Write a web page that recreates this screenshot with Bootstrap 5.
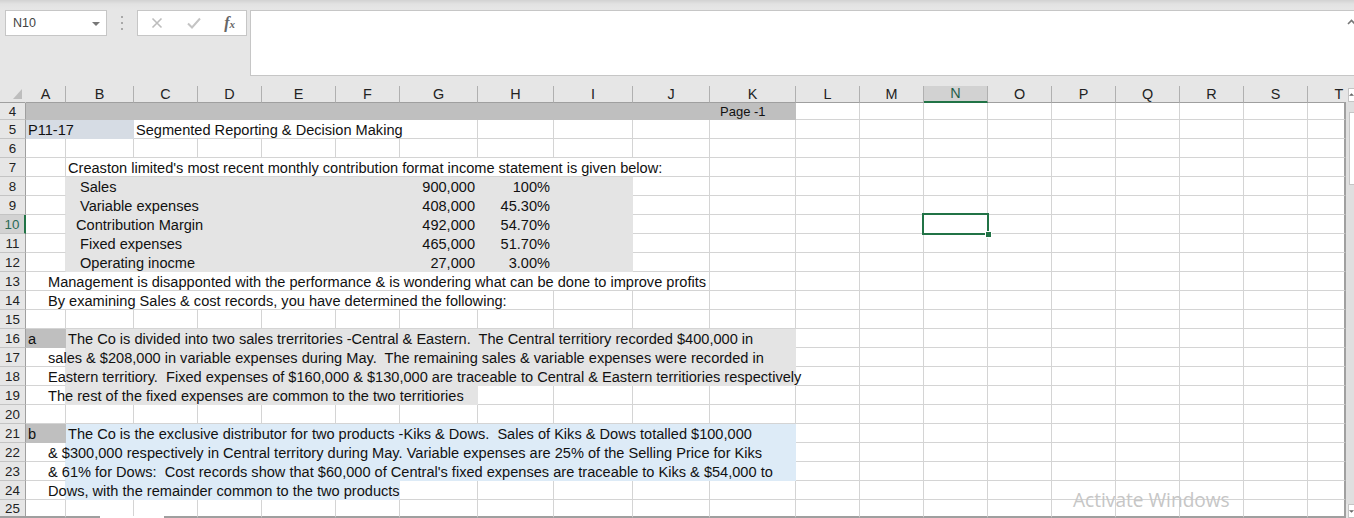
<!DOCTYPE html>
<html lang="en">
<head>
<meta charset="utf-8">
<title>Segmented Reporting</title>
<link href="https://cdn.jsdelivr.net/npm/bootstrap@5.3.0/dist/css/bootstrap.min.css" rel="stylesheet">
<style>
html,body{height:518px;overflow:hidden;background:#e6e6e6;font-family:"Liberation Sans",Arial,sans-serif;color:#111}
.xl-top{height:86px;padding-top:10px;background:linear-gradient(#d2d2d2 0,#e2e2e2 4px,#e6e6e6 9px)}
.xl-name{width:102px;height:26px;margin-left:5px;background:#fff;border:1px solid #c6c6c6;font-size:12.5px;color:#444;padding:1px 6px 0 7px}
.xl-caret{width:0;height:0;border-left:4px solid transparent;border-right:4px solid transparent;border-top:4px solid #777}
.xl-dots{width:30px;height:26px}
.xl-dots i{display:block;width:2px;height:2px;background:#a8a8a8;margin:2px 0}
.xl-fxbox{width:110px;height:26px;background:#fff;border:1px solid #c6c6c6;padding:0 11px 0 13px}
.xl-fx{font-family:"Liberation Serif",serif;font-style:italic;font-weight:700;font-size:16px;color:#666;line-height:1}
.xl-fx span{font-size:11px}
.xl-formula{height:66px;margin-left:3px;background:#fff;border:1px solid #c6c6c6;border-right:0;position:relative}
.xl-formula svg{position:absolute;right:-2px;top:8px}
.xl-sheet{position:relative;height:432px}
.xl-tbl{table-layout:fixed;border-collapse:separate;border-spacing:0;width:1346px;background:#fff;font-size:14.58px}
.xl-tbl td{height:19px;padding:2px 2px 0;line-height:16px;white-space:nowrap;border-right:1px solid #d4d4d4;border-bottom:1px solid #d4d4d4;vertical-align:bottom;overflow:visible}
.xl-tbl td:last-child{border-right:2px solid #a0a0a0}
.xl-tbl th{height:19px;padding:2px 0 0;background:#e6e6e6;font-weight:400;font-size:13.33px;line-height:16px;text-align:center;color:#222;border-right:1px solid #9f9f9f;border-bottom:1px solid #c4c4c4}
.xl-tbl thead th{height:17px;padding:0;font-size:14.4px;line-height:15px;border-right:1px solid #b0b0b0;border-bottom:1px solid #9f9f9f}
.xl-tbl thead th:last-child{border-right:0;padding-left:24px}
.xl-tbl thead th.xl-corner{border-right:1px solid #e6e6e6;position:relative}
.xl-corner svg{position:absolute;left:13px;top:2px}
.xl-tbl thead th.xl-colsel{background:#d2d2d2;color:#1f5f4a;border-bottom:2px solid #217346}
.xl-tbl th.xl-rowsel{background:#d2d2d2;color:#2a6a55;border-right:2px solid #217346}
.xl-tbl tr.xl-r4 td,.xl-tbl tr.xl-r4 th{height:17px;padding-top:0;line-height:15px}
.xl-tbl tr.xl-r25 td,.xl-tbl tr.xl-r25 th{height:18px;padding-top:1px;line-height:15px;border-bottom:2px solid #9f9f9f}
.xl-tbl td.xl-band{background:#bfbfbf;border-color:#bfbfbf}
.xl-tbl td.xl-page{font-size:13px;padding-left:10px}
.xl-tbl td.xl-steel{background:#d6dce4;border-color:#d6dce4}
.xl-tbl td.xl-gray{background:#e4e4e4;border-color:#e4e4e4}
.xl-tbl td.xl-blue{background:#ddebf7;border-color:#ddebf7}
.xl-tbl td.xl-edgeg{border-right-color:#e4e4e4}
.xl-tbl td.xl-edgeb{border-right-color:#ddebf7}
.xl-tbl td.xl-ind{padding-left:22px}
.xl-tbl td.xl-i1{padding-left:14px}
.xl-tbl td.xl-i2{padding-left:10px}
.xl-tbl td.xl-num{text-align:right;padding-right:2px}
.xl-tbl td.xl-pct{text-align:right;padding-right:3px}
.xl-tbl td.xl-sel{position:relative}
.xl-cursor{position:absolute;left:-2px;top:-2px;width:67px;height:22px;border:2px solid #217346}
.xl-cursor::after{content:"";position:absolute;right:-4px;bottom:-4px;width:5px;height:5px;background:#217346;border:1px solid #fff;box-sizing:content-box;margin:-1px}
.xl-sb{width:8px;padding-top:2px}
.xl-sbbtn{height:14px;background:#fff;border:1px solid #c4c4c4;border-right:0;margin-left:2px}
.xl-sbtrack{background:#dfdfdf}
.xl-thumb{height:73px;margin:10px 0 0 3px;background:#fff;border:1px solid #c4c4c4;border-right:0}
.xl-wm{position:absolute;left:1073px;top:402px;font-family:"Open Sans",sans-serif;font-size:19.1px;line-height:24px;color:#c6c6c6;white-space:nowrap}
.xl-gap{position:absolute;left:100px;bottom:0;width:64px;height:2px;background:#fff}
</style>
</head>
<body class="m-0">
<div class="xl-top d-flex align-items-start">
  <div class="xl-name d-flex align-items-center justify-content-between"><span>N10</span><span class="xl-caret"></span></div>
  <div class="xl-dots d-flex flex-column align-items-center justify-content-center"><i></i><i></i><i></i></div>
  <div class="xl-fxbox d-flex align-items-center justify-content-between">
    <svg width="12" height="12" viewBox="0 0 12 12"><path d="M1.5 1.5l9 9M10.5 1.5l-9 9" stroke="#bdbdbd" stroke-width="1.6" fill="none"/></svg>
    <svg width="14" height="12" viewBox="0 0 14 12"><path d="M1 6.5l4 4 8-9" stroke="#c4c4c4" stroke-width="2" fill="none"/></svg>
    <div class="xl-fx">f<span>x</span></div>
  </div>
  <div class="xl-formula flex-grow-1"><svg width="9" height="6" viewBox="0 0 9 6"><path d="M1 5l3.5-3.5L8 5" stroke="#777" stroke-width="1.6" fill="none"/></svg></div>
</div>
<div class="xl-sheet d-flex">
  <table class="xl-tbl flex-shrink-0">
    <colgroup><col style="width:26px"><col style="width:40px"><col style="width:68px"><col style="width:64px"><col style="width:64px"><col style="width:74px"><col style="width:64px"><col style="width:78px"><col style="width:76px"><col style="width:79px"><col style="width:77px"><col style="width:86px"><col style="width:64px"><col style="width:64px"><col style="width:64px"><col style="width:64px"><col style="width:64px"><col style="width:64px"><col style="width:64px"><col style="width:64px"><col style="width:38px"></colgroup>
    <thead><tr><th class="xl-corner"><svg width="10" height="12" viewBox="0 0 10 12"><path d="M9 1v10H0z" fill="#bdbdbd"/></svg></th><th>A</th><th>B</th><th>C</th><th>D</th><th>E</th><th>F</th><th>G</th><th>H</th><th>I</th><th>J</th><th>K</th><th>L</th><th>M</th><th class="xl-colsel">N</th><th>O</th><th>P</th><th>Q</th><th>R</th><th>S</th><th>T</th></tr></thead>
    <tbody>
      <tr class="xl-r4"><th>4</th><td class="xl-band" colspan="10"></td><td class="xl-band xl-page">Page -1</td><td></td><td></td><td></td><td></td><td></td><td></td><td></td><td></td><td></td></tr>
      <tr><th>5</th><td class="xl-steel" colspan="2">P11-17</td><td colspan="5">Segmented Reporting &amp; Decision Making</td><td></td><td></td><td></td><td></td><td></td><td></td><td></td><td></td><td></td><td></td><td></td><td></td><td></td></tr>
      <tr><th>6</th><td></td><td></td><td></td><td></td><td></td><td></td><td></td><td></td><td></td><td></td><td></td><td></td><td></td><td></td><td></td><td></td><td></td><td></td><td></td><td></td></tr>
      <tr><th>7</th><td></td><td colspan="9">Creaston limited's most recent monthly contribution format income statement is given below:</td><td></td><td></td><td></td><td></td><td></td><td></td><td></td><td></td><td></td><td></td></tr>
      <tr><th>8</th><td class="xl-edgeg"></td><td class="xl-gray xl-i1" colspan="5">Sales</td><td class="xl-gray xl-num">900,000</td><td class="xl-gray xl-pct">100%</td><td class="xl-gray"></td><td></td><td></td><td></td><td></td><td></td><td></td><td></td><td></td><td></td><td></td><td></td></tr>
      <tr><th>9</th><td class="xl-edgeg"></td><td class="xl-gray xl-i1" colspan="5">Variable expenses</td><td class="xl-gray xl-num">408,000</td><td class="xl-gray xl-pct">45.30%</td><td class="xl-gray"></td><td></td><td></td><td></td><td></td><td></td><td></td><td></td><td></td><td></td><td></td><td></td></tr>
      <tr><th class="xl-rowsel">10</th><td class="xl-edgeg"></td><td class="xl-gray xl-i2" colspan="5">Contribution Margin</td><td class="xl-gray xl-num">492,000</td><td class="xl-gray xl-pct">54.70%</td><td class="xl-gray"></td><td></td><td></td><td></td><td></td><td class="xl-sel"><div class="xl-cursor"></div></td><td></td><td></td><td></td><td></td><td></td><td></td></tr>
      <tr><th>11</th><td class="xl-edgeg"></td><td class="xl-gray xl-i1" colspan="5">Fixed expenses</td><td class="xl-gray xl-num">465,000</td><td class="xl-gray xl-pct">51.70%</td><td class="xl-gray"></td><td></td><td></td><td></td><td></td><td></td><td></td><td></td><td></td><td></td><td></td><td></td></tr>
      <tr><th>12</th><td class="xl-edgeg"></td><td class="xl-gray xl-i1" colspan="5">Operating inocme</td><td class="xl-gray xl-num">27,000</td><td class="xl-gray xl-pct">3.00%</td><td class="xl-gray"></td><td></td><td></td><td></td><td></td><td></td><td></td><td></td><td></td><td></td><td></td><td></td></tr>
      <tr><th>13</th><td class="xl-ind" colspan="10">Management is disapponted with the performance &amp; is wondering what can be done to improve profits</td><td></td><td></td><td></td><td></td><td></td><td></td><td></td><td></td><td></td><td></td></tr>
      <tr><th>14</th><td class="xl-ind" colspan="8">By examining Sales &amp; cost records, you have determined the following:</td><td></td><td></td><td></td><td></td><td></td><td></td><td></td><td></td><td></td><td></td><td></td><td></td></tr>
      <tr><th>15</th><td></td><td></td><td></td><td></td><td></td><td></td><td></td><td></td><td></td><td></td><td></td><td></td><td></td><td></td><td></td><td></td><td></td><td></td><td></td><td></td></tr>
      <tr><th>16</th><td class="xl-band">a</td><td class="xl-gray" colspan="10">The Co is divided into two sales trerritories -Central &amp; Eastern.&nbsp; The Central territiory recorded $400,000 in</td><td></td><td></td><td></td><td></td><td></td><td></td><td></td><td></td><td></td></tr>
      <tr><th>17</th><td class="xl-ind xl-edgeg">sales &amp; $208,000 in variable expenses during May.&nbsp; The remaining sales &amp; variable expenses were recorded in</td><td class="xl-gray" colspan="10"></td><td></td><td></td><td></td><td></td><td></td><td></td><td></td><td></td><td></td></tr>
      <tr><th>18</th><td class="xl-ind xl-edgeg">Eastern territiory.&nbsp; Fixed expenses of $160,000 &amp; $130,000 are traceable to Central &amp; Eastern territiories respectively</td><td class="xl-gray" colspan="10"></td><td></td><td></td><td></td><td></td><td></td><td></td><td></td><td></td><td></td></tr>
      <tr><th>19</th><td class="xl-ind xl-edgeg">The rest of the fixed expenses are common to the two territiories</td><td class="xl-gray" colspan="6"></td><td></td><td></td><td></td><td></td><td></td><td></td><td></td><td></td><td></td><td></td><td></td><td></td><td></td></tr>
      <tr><th>20</th><td></td><td></td><td></td><td></td><td></td><td></td><td></td><td></td><td></td><td></td><td></td><td></td><td></td><td></td><td></td><td></td><td></td><td></td><td></td><td></td></tr>
      <tr><th>21</th><td class="xl-band">b</td><td class="xl-blue" colspan="10">The Co is the exclusive distributor for two products -Kiks &amp; Dows.&nbsp; Sales of Kiks &amp; Dows totalled $100,000</td><td></td><td></td><td></td><td></td><td></td><td></td><td></td><td></td><td></td></tr>
      <tr><th>22</th><td class="xl-ind xl-edgeb">&amp; $300,000 respectively in Central territory during May. Variable expenses are 25% of the Selling Price for Kiks</td><td class="xl-blue" colspan="10"></td><td></td><td></td><td></td><td></td><td></td><td></td><td></td><td></td><td></td></tr>
      <tr><th>23</th><td class="xl-ind xl-edgeb">&amp; 61% for Dows:&nbsp; Cost records show that $60,000 of Central's fixed expenses are traceable to Kiks &amp; $54,000 to</td><td class="xl-blue" colspan="10"></td><td></td><td></td><td></td><td></td><td></td><td></td><td></td><td></td><td></td></tr>
      <tr><th>24</th><td class="xl-ind xl-edgeb">Dows, with the remainder common to the two products</td><td class="xl-blue" colspan="5"></td><td></td><td></td><td></td><td></td><td></td><td></td><td></td><td></td><td></td><td></td><td></td><td></td><td></td><td></td></tr>
      <tr class="xl-r25"><th>25</th><td></td><td></td><td></td><td></td><td></td><td></td><td></td><td></td><td></td><td></td><td></td><td></td><td></td><td></td><td></td><td></td><td></td><td></td><td></td><td></td></tr>
    </tbody>
  </table>
  <aside class="xl-sb d-flex flex-column flex-shrink-0">
    <div class="xl-sbbtn d-flex justify-content-center"><svg width="6" height="12" viewBox="0 0 6 12"><path d="M0 7l3-3 3 3z" fill="#666"/></svg></div>
    <div class="xl-sbtrack flex-grow-1"><div class="xl-thumb"></div></div>
    <div class="xl-sbbtn d-flex justify-content-center"><svg width="6" height="12" viewBox="0 0 6 12"><path d="M0 5l3 3 3-3z" fill="#666"/></svg></div>
  </aside>
  <div class="xl-gap"></div>
  <div class="xl-wm">Activate Windows</div>
</div>
<script src="https://cdn.jsdelivr.net/npm/bootstrap@5.3.0/dist/js/bootstrap.bundle.min.js"></script>
</body>
</html>
